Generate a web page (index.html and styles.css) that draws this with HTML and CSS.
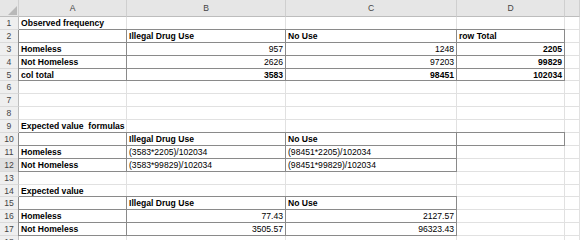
FILE: index.html
```html
<!DOCTYPE html>
<html>
<head>
<meta charset="utf-8">
<link rel="stylesheet" href="styles.css">
</head>
<body>
<div class="sheet">
  <div class="corner"><svg width="19" height="17" viewBox="0 0 19 17"><polygon points="17,6 17,15 8,15" fill="#b9b9b9"/></svg></div>
  <div class="ch">A</div><div class="ch">B</div><div class="ch">C</div><div class="ch">D</div><div class="ch"></div>

  <div class="rh">1</div><div class="c bold">Observed frequency</div><div class="c"></div><div class="c"></div><div class="c"></div><div class="c"></div>
  <div class="rh">2</div><div class="c b"></div><div class="c b bold">Illegal Drug Use</div><div class="c b bold">No Use</div><div class="c b bold">row Total</div><div class="c"></div>
  <div class="rh">3</div><div class="c b bold">Homeless</div><div class="c b num">957</div><div class="c b num">1248</div><div class="c b num bold">2205</div><div class="c"></div>
  <div class="rh">4</div><div class="c b bold">Not Homeless</div><div class="c b num">2626</div><div class="c b num">97203</div><div class="c b num bold">99829</div><div class="c"></div>
  <div class="rh">5</div><div class="c b bold">col total</div><div class="c b num bold">3583</div><div class="c b num bold">98451</div><div class="c b num bold">102034</div><div class="c"></div>
  <div class="rh">6</div><div class="c"></div><div class="c"></div><div class="c"></div><div class="c"></div><div class="c"></div>
  <div class="rh">7</div><div class="c"></div><div class="c"></div><div class="c"></div><div class="c"></div><div class="c"></div>
  <div class="rh">8</div><div class="c"></div><div class="c"></div><div class="c"></div><div class="c"></div><div class="c"></div>
  <div class="rh">9</div><div class="c bold pre">Expected value  formulas</div><div class="c"></div><div class="c"></div><div class="c"></div><div class="c"></div>
  <div class="rh">10</div><div class="c b"></div><div class="c b bold">Illegal Drug Use</div><div class="c b bold">No Use</div><div class="c b"></div><div class="c"></div>
  <div class="rh">11</div><div class="c b bold">Homeless</div><div class="c b">(3583*2205)/102034</div><div class="c b">(98451*2205)/102034</div><div class="c"></div><div class="c"></div>
  <div class="rh sel">12</div><div class="c b bold">Not Homeless</div><div class="c b">(3583*99829)/102034</div><div class="c b">(98451*99829)/102034</div><div class="c"></div><div class="c"></div>
  <div class="rh">13</div><div class="c"></div><div class="c"></div><div class="c"></div><div class="c"></div><div class="c"></div>
  <div class="rh">14</div><div class="c bold">Expected value</div><div class="c"></div><div class="c"></div><div class="c"></div><div class="c"></div>
  <div class="rh">15</div><div class="c b"></div><div class="c b bold">Illegal Drug Use</div><div class="c b bold">No Use</div><div class="c"></div><div class="c"></div>
  <div class="rh">16</div><div class="c b bold">Homeless</div><div class="c b num">77.43</div><div class="c b num">2127.57</div><div class="c"></div><div class="c"></div>
  <div class="rh">17</div><div class="c b bold">Not Homeless</div><div class="c b num">3505.57</div><div class="c b num">96323.43</div><div class="c"></div><div class="c"></div>
  <div class="rh">18</div><div class="c"></div><div class="c"></div><div class="c"></div><div class="c"></div><div class="c"></div>
</div>
</body>
</html>
```
FILE: styles.css
```css
html, body {
  margin: 0;
  padding: 0;
  background: #ffffff;
  overflow: hidden;
}
.sheet {
  display: grid;
  grid-template-columns: 19px 108px 159px 171px 108px 1fr;
  grid-template-rows: 17px repeat(18, 12.9px);
  width: 580px;
  font-family: "Liberation Sans", Arial, sans-serif;
  font-size: 8.6px;
  color: #000;
}
.sheet > div {
  box-sizing: border-box;
  overflow: hidden;
  white-space: nowrap;
}
.corner {
  background: #e6e6e6;
  border-right: 1px solid #cfcfcf;
  border-bottom: 1px solid #bdbdbd;
}
.corner svg { display: block; }
.ch {
  background: #e6e6e6;
  border-right: 1px solid #cfcfcf;
  border-bottom: 1px solid #bdbdbd;
  text-align: center;
  line-height: 17px;
  font-size: 8.6px;
  color: #444;
}
.rh {
  background: #efefef;
  border-right: 1px solid #bdbdbd;
  border-bottom: 1px solid #dadada;
  text-align: center;
  line-height: 12px;
  font-size: 8.6px;
  color: #444;
}
.rh.sel {
  background: #e0e0e0;
}
.c {
  border-right: 1px solid #e1e1e1;
  border-bottom: 1px solid #e1e1e1;
  line-height: 12.5px;
  padding: 0 2px;
}
.c.b {
  border-right-color: #8a8a8a;
  border-bottom-color: #8a8a8a;
  box-shadow: 0 -1px 0 #8a8a8a, -1px 0 0 #8a8a8a;
}
.bold { font-weight: bold; }
.num { text-align: right; }
.pre { white-space: pre !important; }
```
